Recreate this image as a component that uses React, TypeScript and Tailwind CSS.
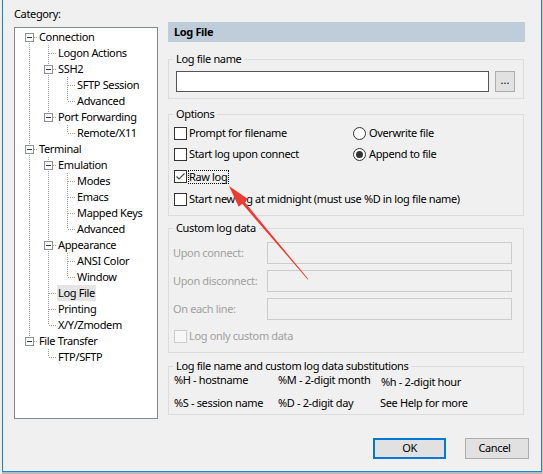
import React from 'react';

/**
 * Session options — "Log File" category page of the SecureCRT-style
 * session options dialog. Static recreation; nothing here is wired up.
 */

type Node = { label: string; children?: Node[] };

const TREE: Node[] = [
  {
    label: 'Connection',
    children: [
      { label: 'Logon Actions' },
      { label: 'SSH2', children: [{ label: 'SFTP Session' }, { label: 'Advanced' }] },
      { label: 'Port Forwarding', children: [{ label: 'Remote/X11' }] },
    ],
  },
  {
    label: 'Terminal',
    children: [
      {
        label: 'Emulation',
        children: [{ label: 'Modes' }, { label: 'Emacs' }, { label: 'Mapped Keys' }, { label: 'Advanced' }],
      },
      { label: 'Appearance', children: [{ label: 'ANSI Color' }, { label: 'Window' }] },
      { label: 'Log File' },
      { label: 'Printing' },
      { label: 'X/Y/Zmodem' },
    ],
  },
  { label: 'File Transfer', children: [{ label: 'FTP/SFTP' }] },
];

type Row = {
  label: string;
  guides: boolean[]; // one per ancestor level: does a line continue through this row
  hasNext: boolean;
  hasChildren: boolean;
  first: boolean;
};

function flatten(nodes: Node[], guides: boolean[] = [], out: Row[] = []): Row[] {
  nodes.forEach((n, i) => {
    const hasNext = i < nodes.length - 1;
    out.push({
      label: n.label,
      guides,
      hasNext,
      hasChildren: !!n.children?.length,
      first: out.length === 0,
    });
    if (n.children) flatten(n.children, [...guides, hasNext], out);
  });
  return out;
}

const ROWS = flatten(TREE);
const DOT = '#a0a0a0';

const GuideCell = ({ on }: { on: boolean }) => (
  <svg width="19" height="16" className="shrink-0" shapeRendering="crispEdges">
    {on && <line x1="9.5" y1="0" x2="9.5" y2="16" stroke={DOT} strokeDasharray="1 1" />}
  </svg>
);

const OwnCell = ({ row }: { row: Row }) => (
  <svg width="18" height="16" className="shrink-0" shapeRendering="crispEdges">
    {!row.first && <line x1="9.5" y1="0" x2="9.5" y2="8" stroke={DOT} strokeDasharray="1 1" />}
    {row.hasNext && <line x1="9.5" y1="8" x2="9.5" y2="16" stroke={DOT} strokeDasharray="1 1" />}
    <line x1="10" y1="8.5" x2="17" y2="8.5" stroke={DOT} strokeDasharray="1 1" />
    {row.hasChildren && (
      <>
        <rect x="5.5" y="4.5" width="8" height="8" fill="#fff" stroke="#919191" />
        <line x1="7" y1="8.5" x2="12" y2="8.5" stroke="#1d3f74" />
      </>
    )}
  </svg>
);

const Tree = () => (
  <div className="h-[392px] w-[144px] border border-[#828790] bg-white pl-[5px] pt-px">
    {ROWS.map((r, i) => (
      <div key={i} className="flex h-4 items-center">
        {r.guides.map((g, j) => (
          <GuideCell key={j} on={g} />
        ))}
        <OwnCell row={r} />
        <span className={`whitespace-nowrap px-px leading-4 ${r.label === 'Log File' ? 'bg-[#e5e5e5]' : ''}`}>
          {r.label}
        </span>
      </div>
    ))}
  </div>
);

const Check = ({ checked = false, disabled = false }: { checked?: boolean; disabled?: boolean }) => (
  <span
    className={`flex h-[13px] w-[13px] shrink-0 items-center justify-center border ${
      disabled ? 'border-[#cccccc] bg-[#f7f7f7]' : 'border-[#333333] bg-white'
    }`}
  >
    {checked && (
      <svg width="11" height="11" viewBox="0 0 11 11">
        <path d="M1.5 5.5 L4 8 L9.5 2.5" fill="none" stroke="#444" strokeWidth="1.1" />
      </svg>
    )}
  </span>
);

const Radio = ({ checked = false }: { checked?: boolean }) => (
  <span className="flex h-[13px] w-[13px] shrink-0 items-center justify-center rounded-full border border-[#333333] bg-white">
    {checked && <span className="h-[7px] w-[7px] rounded-full bg-[#333333]" />}
  </span>
);

const Group = ({ title, className = '', children }: { title: string; className?: string; children: React.ReactNode }) => (
  <fieldset className={`w-[356px] border border-[#dcdcdc] ${className}`}>
    <legend className="ml-[4px] px-[3px] leading-[14px]">{title}</legend>
    {children}
  </fieldset>
);

const DisabledField = ({ label }: { label: string }) => (
  <div className="flex items-center">
    <span className="w-[94px] text-[#a0a0a0]">{label}</span>
    <span className="h-[22px] w-[245px] border border-[#cccccc] bg-[#f0f0f0]" />
  </div>
);

export default function App() {
  return (
    <div className="relative flex h-[474px] w-[543px] overflow-hidden bg-[#b9b9b9] font-['Noto_Sans',sans-serif] text-[11px] tracking-[-0.35px] text-black">
      <div className="h-full w-[2px] shrink-0 bg-[#ececec]" />

      <div className="flex h-[472px] w-[540px] shrink-0 flex-col border-x border-b border-[#1883d7] bg-[#f0f0f0]">
        <div className="flex">
          {/* category tree */}
          <div className="w-[165px] shrink-0 pl-[11px] pt-[6px]">
            <div className="mb-[5px] h-4 leading-4">Category:</div>
            <Tree />
          </div>

          {/* Log File page */}
          <div className="pt-[22px]">
            <div className="flex h-[20px] w-[357px] items-center bg-[#bfcddb] pl-[6px] font-bold">Log File</div>

            <Group title="Log file name" className="mt-[10px]">
              <div className="flex items-center gap-[6px] pb-[6px] pl-[7px] pt-[5px]">
                <span className="h-[21px] w-[313px] border border-[#555555] bg-white" />
                <span className="flex h-[21px] w-[20px] items-center justify-center border border-[#adadad] bg-[#e1e1e1] pb-[3px] tracking-normal">
                  ...
                </span>
              </div>
            </Group>

            <Group title="Options" className="mt-[8px]">
              <div className="pb-[4px] pl-[5px] pt-px">
                <div className="flex h-[22px] items-center">
                  <div className="flex w-[179px] items-center">
                    <Check />
                    <span className="ml-[2px]">Prompt for filename</span>
                  </div>
                  <div className="flex items-center">
                    <Radio />
                    <span className="ml-[3px]">Overwrite file</span>
                  </div>
                </div>
                <div className="flex h-[21px] items-center">
                  <div className="flex w-[179px] items-center">
                    <Check />
                    <span className="ml-[2px]">Start log upon connect</span>
                  </div>
                  <div className="flex items-center">
                    <Radio checked />
                    <span className="ml-[3px]">Append to file</span>
                  </div>
                </div>
                <div className="flex h-[23px] items-center">
                  <Check checked />
                  <span className="ml-px border border-dotted border-black pr-px leading-3">Raw log</span>
                </div>
                <div className="flex h-[23px] items-center">
                  <Check />
                  <span className="ml-[2px]">Start new log at midnight (must use %D in log file name)</span>
                </div>
              </div>
            </Group>

            <Group title="Custom log data" className="mt-[5px]">
              <div className="flex flex-col gap-[6px] pb-[5px] pl-[4px] pt-[7px]">
                <DisabledField label="Upon connect:" />
                <DisabledField label="Upon disconnect:" />
                <DisabledField label="On each line:" />
                <div className="flex h-[21px] items-center pl-px">
                  <Check disabled />
                  <span className="ml-[2px] text-[#a0a0a0]">Log only custom data</span>
                </div>
              </div>
            </Group>

            <Group title="Log file name and custom log data substitutions" className="mt-[6px]">
              <div className="grid grid-cols-[104px_102px_1fr] gap-y-[7px] pb-[4px] pl-[5px] leading-[14px]">
                <span>%H - hostname</span>
                <span>%M - 2-digit month</span>
                <span className="mt-[2px] pl-px">%h - 2-digit hour</span>
                <span>%S - session name</span>
                <span>%D - 2-digit day</span>
                <span>See Help for more</span>
              </div>
            </Group>
          </div>
        </div>

        {/* dialog buttons */}
        <div className="mt-[19px] flex justify-end gap-[19px] pr-[12px]">
          <button type="button" className="flex h-[21px] w-[73px] items-center justify-center border-2 border-[#0078d7] bg-[#e1e1e1]">
            OK
          </button>
          <button type="button" className="flex h-[21px] w-[64px] items-center justify-center border border-[#adadad] bg-[#e1e1e1] pr-[5px]">
            Cancel
          </button>
        </div>
      </div>

      <div className="h-full flex-1 bg-[#d7cfa0]" />

      {/* annotation arrow drawn over the screenshot */}
      <svg className="pointer-events-none absolute left-0 top-0" width="543" height="474">
        <polygon
          points="229,186 247.9,198.9 244.4,201.8 308.3,279 307.7,279.4 242.2,203.8 238.7,206.7"
          fill="#ee3b2f"
        />
      </svg>
    </div>
  );
}
